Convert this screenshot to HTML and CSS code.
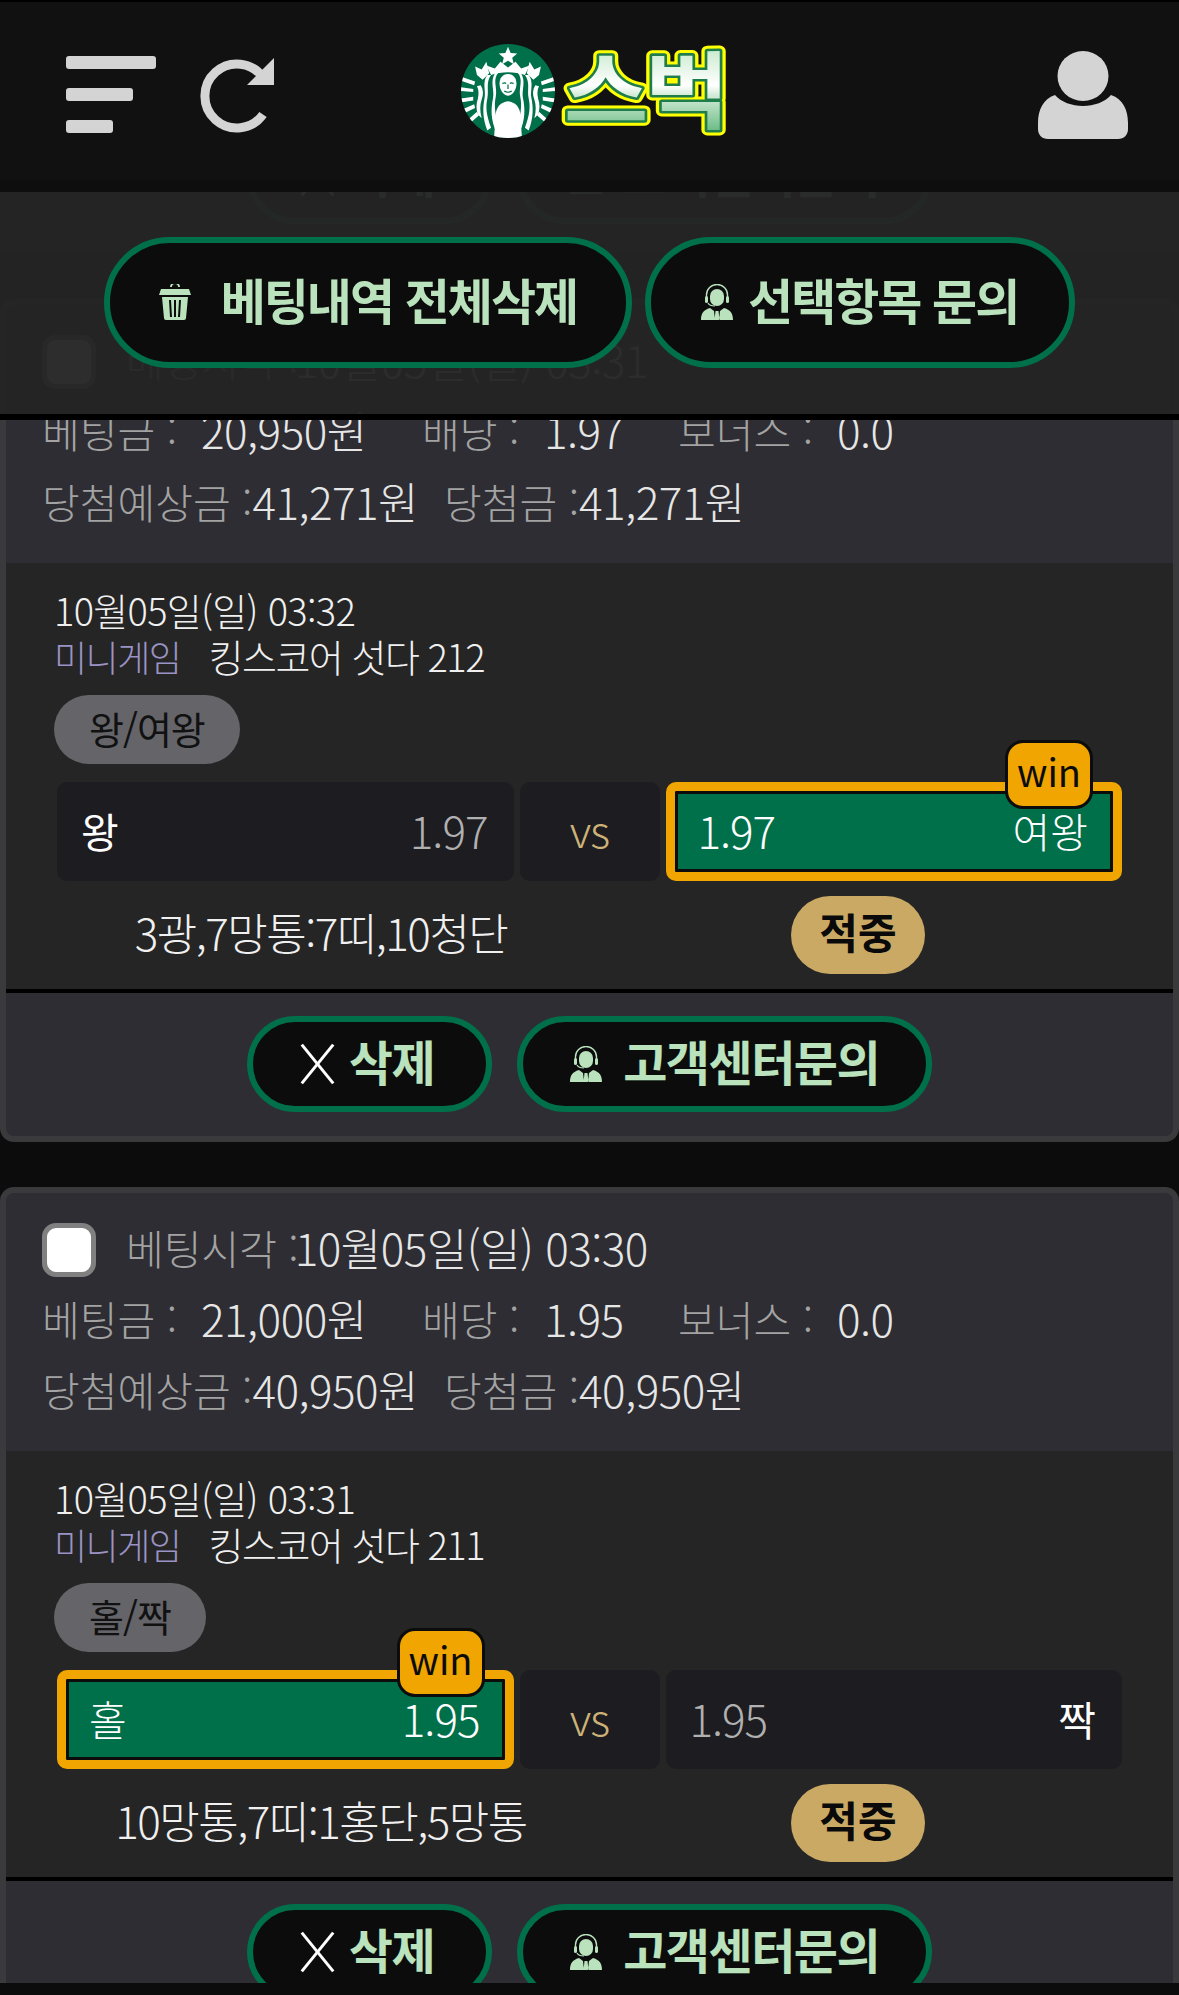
FILE: index.html
```html
<!DOCTYPE html>
<html lang="ko">
<head>
    <meta charset="UTF-8">
    <meta name="viewport" content="width=device-width, initial-scale=1.0">
    <title>베팅내역</title>
    <link rel="stylesheet" href="styles.css">
</head>
<body>

<svg class="icon-defs" width="0" height="0">
    <defs>
        <symbol id="agent" viewBox="0 0 34 36">
            <path d="M10 12a7 7 0 0 1 14 0v3a7 7 0 0 1-14 0z"/>
            <path d="M6.500 15v-4a10.500 10.500 0 0 1 21 0v4" fill="none" stroke="currentColor" stroke-width="1.400"/>
            <rect x="5" y="12" width="3" height="7" rx="1.500"/>
            <rect x="26" y="12" width="3" height="7" rx="1.500"/>
            <path d="M8 19c1 2 3 3 7 3" fill="none" stroke="currentColor" stroke-width="1.200"/>
            <path d="M1 36c0-6 2-10 9-12l4 3 1 9zM33 36c0-6-2-10-9-12l-4 3-1 9zM15.500 27h3l1 9h-5z"/>
        </symbol>
        <g id="siren-side">
            <path d="M70 31l3-12 5 8 7-3-2 9-6 5z"/>
            <path d="M60 30c7 8 1 16 3 26 2 9 1 20-5 36l4 3c7-15 6-27 4-37-2-9 4-19-3-28z"/>
            <path d="M68 33c6 8 2 16 4 25 2 9 1 18-4 31l4 3c5-13 5-24 3-34-2-8 3-17-3-25z"/>
            <path d="M79 44c-3 5-3 10-1 15 2 6 2 12 0 20l4-4c2-6 2-11 0-17-1-5-1-9 1-13z"/>
            <path d="M85 40l14-5 1 4-14 5zM87 48l13-2v4l-13 1zM87 56l13 2-1 4-12-2zM86 64l11 5-2 4-10-5zM83 72l9 8-3 3-8-7z"/>
        </g>
    </defs>
</svg>

<header class="topbar">
    <div class="topbar-left">
        <div class="menu-icon"><span></span><span></span><span></span></div>
        <svg class="refresh-icon" viewBox="0 0 76 76">
            <path d="M64 56.500a32 32 0 1 1 0-37" fill="none" stroke="#d4d4d4" stroke-width="9"/>
            <path d="M75 0v27H48z" fill="#d4d4d4"/>
        </svg>
    </div>
    <div class="logo">
        <svg class="logo-mark" viewBox="0 0 100 100">
            <clipPath id="mark-clip"><circle cx="50" cy="50" r="50"/></clipPath>
            <g clip-path="url(#mark-clip)">
                <rect width="100" height="100" fill="#00704a"/>
                <g fill="#fff">
                    <path d="M50 3l2.800 6.500 7 .5-5.300 4.500 1.700 7-6.200-3.700-6.200 3.700 1.700-7-5.300-4.500 7-.5z"/>
                    <path d="M27 23l9 3 6-7 8 6 8-6 6 7 9-3-5 10c-11-4-25-4-36 0z"/>
                    <use href="#siren-side"/>
                    <use href="#siren-side" transform="matrix(-1 0 0 1 100 0)"/>
                    <path d="M50 32c-6 0-9 5-9 10 0 6 3 12 9 13 6-1 9-7 9-13 0-5-3-10-9-10z"/>
                    <path d="M50 61c-8 1-12 6-13 13l-2 28h30l-2-28c-1-7-5-12-13-13z"/>
                </g>
                <path d="M44 42c2-1 3-1 4 0M52 42c1-1 2-1 4 0M50 43v5M46 50c3 2 5 2 8 0" fill="none" stroke="#00704a" stroke-width="1.300"/>
            </g>
        </svg>
        <svg class="logo-word" viewBox="0 0 180 150">
            <defs>
                <linearGradient id="word-fill" x1="0" y1="0" x2="0" y2="1">
                    <stop offset="0" stop-color="#a5dcae"/>
                    <stop offset=".5" stop-color="#ffffff"/>
                    <stop offset=".58" stop-color="#d5ecd9"/>
                    <stop offset="1" stop-color="#3fa862"/>
                </linearGradient>
            </defs>
            <g class="word-text">
                <text class="word-glow" x="90" y="106">스벅</text>
                <text class="word-edge" x="90" y="106">스벅</text>
                <text class="word-face" x="90" y="106">스벅</text>
            </g>
        </svg>
    </div>
    <svg class="user-icon" viewBox="0 0 90 88">
        <ellipse cx="45" cy="25" rx="25.500" ry="25"/>
        <path d="M0 72c0-13 5-24 17-28 6 7 17 11 28 11s22-4 28-11c12 4 17 15 17 28v6c0 6-4 10-10 10H10C4 88 0 84 0 78z"/>
    </svg>
</header>

<main class="bet-list">

    <div class="card-tail">
        <div class="card-actions">
            <button class="btn-outline btn-small btn-del"><span class="btn-x"></span>삭제</button>
            <button class="btn-outline btn-small"><svg class="btn-icon"><use href="#agent"/></svg>고객센터문의</button>
        </div>
    </div>

    <section class="bet-card">
        <div class="bet-info">
            <div class="info-row">
                <span class="check-box"></span>
                <span class="lbl time-lbl">베팅시각 :</span><span class="val">10월05일(일) 03:31</span>
            </div>
            <div class="info-row">
                <span class="lbl amount-lbl">베팅금 :</span><span class="val amount-val">20,950원</span>
                <span class="lbl odds-lbl">배당 :</span><span class="val odds-val">1.97</span>
                <span class="lbl bonus-lbl">보너스 :</span><span class="val">0.0</span>
            </div>
            <div class="info-row">
                <span class="lbl">당첨예상금 :</span><span class="val win-val">41,271원</span>
                <span class="lbl">당첨금 :</span><span class="val">41,271원</span>
            </div>
        </div>
        <div class="bet-detail">
            <div class="game-date">10월05일(일) 03:32</div>
            <div class="game-name"><span class="game-type">미니게임</span>킹스코어 섯다 212</div>
            <div class="market-pill">왕/여왕</div>
            <div class="picks">
                <div class="pick"><span class="pick-name">왕</span><span class="pick-odds">1.97</span></div>
                <div class="pick-vs">vs</div>
                <div class="pick pick-won"><span class="pick-odds">1.97</span><span class="pick-name">여왕</span><span class="win-badge">win</span></div>
            </div>
            <div class="result-row">
                <div class="result-text">3광,7망통:7띠,10청단</div>
                <div class="hit-pill">적중</div>
            </div>
        </div>
        <div class="card-actions">
            <button class="btn-outline btn-small btn-del"><span class="btn-x"></span>삭제</button>
            <button class="btn-outline btn-small"><svg class="btn-icon"><use href="#agent"/></svg>고객센터문의</button>
        </div>
    </section>

    <section class="bet-card">
        <div class="bet-info">
            <div class="info-row">
                <span class="check-box"></span>
                <span class="lbl time-lbl">베팅시각 :</span><span class="val">10월05일(일) 03:30</span>
            </div>
            <div class="info-row">
                <span class="lbl amount-lbl">베팅금 :</span><span class="val amount-val">21,000원</span>
                <span class="lbl odds-lbl">배당 :</span><span class="val odds-val">1.95</span>
                <span class="lbl bonus-lbl">보너스 :</span><span class="val">0.0</span>
            </div>
            <div class="info-row">
                <span class="lbl">당첨예상금 :</span><span class="val win-val">40,950원</span>
                <span class="lbl">당첨금 :</span><span class="val">40,950원</span>
            </div>
        </div>
        <div class="bet-detail">
            <div class="game-date">10월05일(일) 03:31</div>
            <div class="game-name"><span class="game-type">미니게임</span>킹스코어 섯다 211</div>
            <div class="market-pill">홀/짝</div>
            <div class="picks">
                <div class="pick pick-won"><span class="pick-name">홀</span><span class="pick-odds">1.95</span><span class="win-badge">win</span></div>
                <div class="pick-vs">vs</div>
                <div class="pick"><span class="pick-odds">1.95</span><span class="pick-name">짝</span></div>
            </div>
            <div class="result-row">
                <div class="result-text">10망통,7띠:1홍단,5망통</div>
                <div class="hit-pill">적중</div>
            </div>
        </div>
        <div class="card-actions">
            <button class="btn-outline btn-small btn-del"><span class="btn-x"></span>삭제</button>
            <button class="btn-outline btn-small"><svg class="btn-icon"><use href="#agent"/></svg>고객센터문의</button>
        </div>
    </section>

    <div class="action-panel">
        <button class="btn-outline btn-big">
            <svg class="btn-icon-big trash" viewBox="0 0 32 36">
                <path d="M12 3a4 4 0 0 1 8 0" fill="none" stroke="currentColor" stroke-width="2"/>
                <path d="M2 5h28l2 6H0z"/>
                <path fill-rule="evenodd" d="M3 13h26l-2 21a2 2 0 0 1-2 2H7a2 2 0 0 1-2-2zM10 16l1 17h2l-1-17zM15 16v17h2V16zM20 16l-1 17h2l1-17z"/>
            </svg>베팅내역 전체삭제
        </button>
        <button class="btn-outline btn-big btn-ask">
            <svg class="btn-icon-big agent"><use href="#agent"/></svg>선택항목 문의
        </button>
    </div>
</main>

<div class="bottom-bar"></div>

</body>
</html>
```

FILE: styles.css
```css
* {
    box-sizing: border-box;
}

html, body {
    margin: 0;
    padding: 0;
}

body {
    width: 1179px;
    height: 1995px;
    overflow: hidden;
    background-color: #0c0c0c;
    font-family: "Noto Sans CJK KR", "Noto Sans", sans-serif;
    font-weight: 300;
    color: #eee;
}

.icon-defs {
    position: absolute;
}

/* header */
.topbar {
    height: 192px;
    padding: 49px 51px 0 66px;
    display: flex;
    justify-content: space-between;
    align-items: flex-start;
    background-color: #111;
    border-top: 2px solid #000;
    border-bottom: 12px solid #0e0e0e;
}

.topbar-left {
    display: flex;
    align-items: flex-start;
    gap: 43px;
    width: 394px;
}

.menu-icon {
    display: flex;
    flex-direction: column;
    gap: 19px;
    margin-top: 5px;
}

.menu-icon span {
    display: block;
    width: 90px;
    height: 13px;
    border-radius: 3px;
    background-color: #d4d4d4;
}

.menu-icon span:nth-child(2) {
    width: 67px;
}

.menu-icon span:nth-child(3) {
    width: 47px;
}

.refresh-icon {
    width: 76px;
    height: 76px;
    margin-top: 7px;
}

.logo {
    display: flex;
    align-items: center;
    width: 280px;
    height: 94px;
    margin-right: 298px;
    margin-left: 2px;
    margin-top: -7px;
}

.logo-mark {
    width: 94px;
    height: 94px;
    flex: none;
}

.logo-word {
    width: 180px;
    height: 150px;
    flex: none;
}

.word-text {
    transform-origin: 90px 75px;
    transform: scaleX(1.09);
}

.word-text text {
    font-family: "Noto Sans CJK KR", sans-serif;
    font-size: 84px;
    font-weight: 700;
    text-anchor: middle;
    letter-spacing: -3px;
    stroke-linejoin: round;
}

.word-glow {
    fill: #ffff00;
    stroke: #ffff00;
    stroke-width: 11px;
}

.word-edge {
    fill: #1f7d4c;
    stroke: #1f7d4c;
    stroke-width: 5px;
}

.word-face {
    fill: url(#word-fill);
}

.user-icon {
    width: 90px;
    height: 88px;
    fill: #d4d4d4;
    flex: none;
}

/* list */
.bet-list {
    position: relative;
    height: 1791px;
    overflow: hidden;
}

.card-tail {
    height: 62px;
    overflow: hidden;
    background-color: #2d2d33;
    margin-bottom: 45px;
}

.card-tail .card-actions {
    margin-top: -64px;
    padding: 0;
    border-top: 0;
}

.bet-card {
    height: 843px;
    margin-bottom: 45px;
    border: 6px solid #3a3a3c;
    border-radius: 14px;
    background-color: #2d2d33;
    overflow: hidden;
}

.bet-info {
    height: 258px;
    padding: 18px 36px 0;
}

.info-row {
    display: flex;
    align-items: center;
    height: 71px;
    white-space: nowrap;
}

.lbl {
    color: #a3a3a3;
    font-size: 41px;
}

.val {
    color: #e6e6e6;
    font-size: 44px;
    letter-spacing: -0.5px;
}

.check-box {
    width: 54px;
    height: 54px;
    margin-top: 6px;
    margin-right: 30px;
    background-color: #fff;
    border: 5px solid #808080;
    border-radius: 14px;
    flex: none;
}

.time-lbl {
    margin-right: -4px;
}

.amount-lbl {
    width: 159px;
}

.amount-val {
    width: 221px;
}

.odds-lbl {
    width: 122px;
}

.odds-val {
    width: 134px;
}

.bonus-lbl {
    width: 159px;
}

.win-val {
    margin-right: 26px;
}

.bet-detail {
    height: 426px;
    padding: 24px 51px 0 48px;
    background-color: #252525;
}

.game-date, .game-name {
    font-size: 38px;
    line-height: 46px;
    letter-spacing: -0.7px;
    color: #f0f0f0;
    white-space: nowrap;
}

.game-name {
    letter-spacing: -1.5px;
}

.game-type {
    color: #9a93c4;
    font-size: 36px;
    letter-spacing: -1.5px;
    margin-right: 28px;
}

.market-pill {
    display: inline-block;
    height: 69px;
    margin-top: 16px;
    padding: 0 35px;
    border-radius: 35px;
    background-color: #646469;
    color: #111;
    font-size: 38px;
    font-weight: 400;
    line-height: 66px;
    letter-spacing: -1px;
}

.picks {
    display: grid;
    grid-template-columns: 1fr 140px 1fr;
    gap: 6px;
    height: 99px;
    margin-top: 18px;
    margin-left: 3px;
}

.pick {
    position: relative;
    display: flex;
    justify-content: space-between;
    align-items: center;
    padding: 0 26px 4px 24px;
    background-color: #1c1c21;
    border-radius: 10px;
}

.pick-name {
    color: #fff;
    font-size: 41px;
    font-weight: 400;
}

.pick-odds {
    color: #b0b0b0;
    font-size: 44px;
    letter-spacing: -1px;
}

.pick-vs {
    display: flex;
    justify-content: center;
    align-items: center;
    padding-bottom: 6px;
    background-color: #1c1c21;
    border-radius: 10px;
    color: #cdb277;
    font-size: 44px;
    letter-spacing: -1px;
}

.pick-won {
    background-color: #00704a;
    border: 9px solid #f0a500;
    box-shadow: inset 0 0 0 3px #0c0c0c;
    padding: 0 25px 4px 23px;
}

.pick-won .pick-odds, .pick-won .pick-name {
    color: #fff;
    font-weight: 300;
}

.win-badge {
    position: absolute;
    top: -51px;
    right: 20px;
    width: 88px;
    height: 69px;
    border: 3px solid #0c0c0c;
    border-radius: 18px;
    background-color: #f0a500;
    color: #0c0c0c;
    font-size: 38px;
    font-weight: 400;
    line-height: 56px;
    text-align: center;
}

.result-row {
    display: grid;
    grid-template-columns: 528px 1fr;
    column-gap: 9px;
    align-items: center;
    height: 78px;
    margin-top: 15px;
    margin-left: 3px;
}

.result-text {
    text-align: center;
    font-size: 44px;
    line-height: 66px;
    padding-bottom: 6px;
    letter-spacing: -1.5px;
    color: #f0f0f0;
    white-space: nowrap;
}

.hit-pill {
    justify-self: center;
    width: 134px;
    height: 78px;
    border-radius: 39px;
    background-color: #c9a964;
    color: #0a0a0a;
    font-size: 42px;
    font-weight: 700;
    line-height: 70px;
    text-align: center;
}

/* buttons */
.card-actions {
    display: flex;
    justify-content: center;
    gap: 25px;
    padding-top: 23px;
    border-top: 4px solid #000;
}

.btn-outline {
    display: inline-flex;
    align-items: center;
    justify-content: center;
    border: 6px solid #00704a;
    background-color: #0c0c0c;
    color: #b9e2bd;
    font-family: inherit;
    font-weight: 700;
    white-space: nowrap;
}

.btn-small {
    height: 96px;
    padding: 0 47px 9px 46px;
    border-radius: 48px;
    font-size: 48px;
    letter-spacing: -1.5px;
}

.btn-del {
    padding: 0 52px 9px 46px;
}

.btn-x {
    position: relative;
    width: 36px;
    height: 40px;
    margin-right: 14px;
    margin-top: 9px;
}

.btn-x::before, .btn-x::after {
    content: "";
    position: absolute;
    left: 17px;
    top: -5px;
    width: 3px;
    height: 50px;
    background-color: #fff;
    transform: rotate(39deg);
}

.btn-x::after {
    transform: rotate(-39deg);
}

.btn-icon {
    width: 34px;
    height: 36px;
    margin-top: 9px;
    margin-right: 20px;
    fill: currentColor;
}

.action-panel {
    position: absolute;
    top: 0;
    left: 0;
    right: 0;
    height: 228px;
    padding-bottom: 2px;
    display: flex;
    justify-content: center;
    align-items: center;
    gap: 13px;
    background-color: rgba(36, 36, 36, 0.96);
    border-bottom: 6px solid #000;
}

.btn-big {
    height: 131px;
    padding: 0 49px 8px;
    border-radius: 66px;
    font-size: 49px;
    letter-spacing: -2px;
}

.btn-ask {
    padding: 0 51px 8px 49px;
}

.btn-icon-big {
    fill: currentColor;
    margin-top: 8px;
}

.trash {
    width: 32px;
    height: 36px;
    margin-right: 30px;
}

.agent {
    width: 34px;
    height: 36px;
    margin-right: 14px;
}

.bottom-bar {
    height: 12px;
    background-color: #0c0c0c;
}
```
